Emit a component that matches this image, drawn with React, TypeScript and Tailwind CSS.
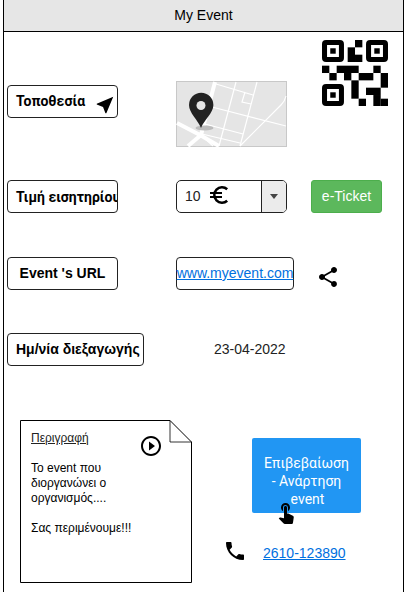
import type { ReactNode } from "react";

const sans = "font-['Liberation_Sans',Arial,sans-serif]";

function Icon({ d, className }: { d: string; className: string }) {
  return (
    <svg viewBox="0 0 24 24" fill="currentColor" className={`shrink-0 ${className}`}>
      <path d={d} />
    </svg>
  );
}

function Label({ children, className }: { children: ReactNode; className: string }) {
  return (
    <div
      className={`flex h-[33px] shrink-0 items-center overflow-hidden rounded-[4px] border border-[#222] text-[14px] font-bold leading-4 whitespace-nowrap ${className}`}
    >
      {children}
    </div>
  );
}

function Finder({ x, y }: { x: number; y: number }) {
  return (
    <>
      <rect x={x + 2.5} y={y + 2.5} width="16.8" height="16.8" rx="1.5" fill="none" stroke="#000" strokeWidth="5" />
      <rect x={x + 8.2} y={y + 8.2} width="5.4" height="5.4" />
    </>
  );
}

const cells: [number, number, number, number][] = [
  [4.5, 0, 1, 1], [3.5, 1, 1, 2], [4.5, 2, 1, 1],
  [0, 3.5, 1, 1], [2, 3.5, 3, 1], [7, 3.5, 1, 1],
  [1, 4.5, 1, 1], [3, 4.5, 1, 1], [5, 4.5, 2, 1], [8, 4.5, 1, 2],
  [4, 5.5, 1, 2.5], [6, 6.5, 2, 1], [7, 7.5, 1, 1.5], [8, 8, 1, 1], [5, 8, 1, 1],
];

function QrCode() {
  return (
    <svg viewBox="0 0 65.5 65.5" className="h-[66px] w-[66px] shrink-0">
      <Finder x={0} y={0} />
      <Finder x={43.7} y={0} />
      <Finder x={0} y={43.7} />
      {cells.map(([x, y, w, h]) => (
        <rect key={`${x}-${y}`} x={x * 7.28} y={y * 7.28} width={w * 7.28} height={h * 7.28} />
      ))}
    </svg>
  );
}

function MapPreview() {
  return (
    <svg viewBox="0 0 111 66" className="h-[66px] w-[111px] shrink-0">
      <rect x=".5" y=".5" width="110" height="65" fill="#e5e5e5" stroke="#c8c8c8" />
      <g fill="none" stroke="#fff">
        <path d="M39 1L25 54M1 42L24 54L43 65M25 54L12 65" strokeWidth="4" />
        <path d="M40 3L77 14M36 26L110 45M29 43L67 53M26 53L64 62M60 1L43 65M81 1L64 65M69 11L66 21L75 23" strokeWidth="1.2" />
        <path d="M64 65L105 24Q109 20 110 15M25 54L37 65" strokeWidth="1.2" />
      </g>
      <ellipse cx="28.5" cy="47" rx="9" ry="2.5" fill="#bbb" />
      <path d="M25 47C22 39 13 32 13 24a12.2 12.2 0 0 1 24.4 0C37.400 32 28 39 25 47Z" fill="#222" />
      <circle cx="25" cy="24.500" r="4.500" fill="#e5e5e5" />
    </svg>
  );
}

export default function App() {
  return (
    <div className={`h-[592px] w-[405px] overflow-hidden bg-white pl-[3px] text-black ${sans}`}>
      <main className="h-[592px] w-[401px] border-x border-black">
        <header className="flex h-8 items-center justify-center border-b border-black bg-[#e6e6e6] text-[14px]">
          My Event
        </header>

        <section className="flex h-[115px] items-start pl-[3px]">
          <Label className="mt-[53px] w-[111px] pl-[8px] font-['Roboto',sans-serif]">
            <span className="w-[79px] pb-px">Τοποθεσία</span>
            <Icon className="mt-[6px] h-[22px] w-[22px] -ml-[1px]" d="M21 3L3 10.530v.98l6.840 2.650L12.480 21h.98L21 3z" />
          </Label>
          <div className="mt-[49px] ml-[58px]"><MapPreview /></div>
          <div className="mt-2 ml-[35px]"><QrCode /></div>
        </section>

        <section className="mt-[33px] flex h-[33px] pl-[3px]">
          <Label className="w-[111px] pl-[8px] font-['Roboto',sans-serif]">Τιμή εισητηρίου</Label>
          <div className="ml-[58px] flex h-[33px] w-[111px] overflow-hidden rounded-[5px] border border-[#222]">
            <div className="flex flex-1 items-center pl-2 text-[14px] text-[#222]">
              <span className="w-[22px]">10</span>
              <svg viewBox="0 0 24 24" className="mt-[-3px] h-6 w-6 shrink-0" fill="none" stroke="#000">
                <path d="M20.200 6.200A7.750 7.750 0 1 0 20.200 17.800" strokeWidth="2.500" />
                <path d="M3 10H15M3 14H15" strokeWidth="2" />
              </svg>
            </div>
            <div className="flex w-[25px] items-center justify-center border-l border-[#222] bg-[#ebebeb]">
              <svg viewBox="0 0 8 5" className="h-[5px] w-2"><path d="M0 0H8L4 5Z" fill="#444" /></svg>
            </div>
          </div>
          <button className="ml-6 h-[33px] w-[71px] rounded-[3px] border border-[#4cae4c] bg-[#5cb85c] text-[14px] text-white">e-Ticket</button>
        </section>

        <section className="mt-11 flex h-[33px] pl-[3px]">
          <Label className="w-[111px] justify-center pb-[2px]">Event 's URL</Label>
          <div className="ml-[58px] flex h-[33px] w-[118px] items-center justify-center rounded-[4px] border border-[#222] text-[14px]">
            <a className="text-[#0070e0] underline">www.myevent.com</a>
          </div>
          <Icon className="mt-2 ml-[22px] h-6 w-6" d="M18 16.080c-.76 0-1.440.3-1.960.77L8.910 12.700c.05-.23.09-.46.09-.7s-.04-.47-.09-.7l7.050-4.110c.54.5 1.250.81 2.040.81 1.660 0 3-1.340 3-3s-1.340-3-3-3-3 1.340-3 3c0 .24.04.47.09.7L8.040 9.810C7.500 9.310 6.790 9 6 9c-1.660 0-3 1.340-3 3s1.340 3 3 3c.79 0 1.500-.31 2.040-.81l7.120 4.160c-.05.21-.08.43-.08.65 0 1.610 1.310 2.920 2.920 2.920s2.920-1.310 2.920-2.920-1.310-2.920-2.920-2.920z" />
        </section>

        <section className="mt-[43px] flex h-[33px] items-center pl-[3px]">
          <Label className="w-[137px] pb-[2px] pl-[8px]">Ημ/νία διεξαγωγής</Label>
          <span className="ml-[70px] text-[14px] text-[#222]">23-04-2022</span>
        </section>

        <section className="mt-[54px] flex h-[163px] pl-4">
          <article className="relative h-[163px] w-[172px] shrink-0 pt-[10px] pl-[11px] text-[12px] leading-[15px]">
            <svg viewBox="0 0 172 163" className="absolute inset-0 h-[163px] w-[172px]" fill="none" stroke="#000">
              <path d="M.5.5H150L171.500 22V162.500H.5Z" />
              <path d="M150 .5V22H171.500" strokeWidth=".8" />
            </svg>
            <div className="relative flex">
              <div className="w-[108px] text-[#222]">
                <p className="mt-px underline">Περιγραφή</p>
                <p className="mt-[15px] text-black">Το event που<br />διοργανώνει ο<br />οργανισμός....</p>
                <p className="mt-[15px] whitespace-nowrap text-black">Σας περιμένουμε!!!</p>
              </div>
              <Icon className="mt-1 h-6 w-6" d="M10 16.500l6-4.500-6-4.500v9zM12 2C6.480 2 2 6.480 2 12s4.480 10 10 10 10-4.480 10-10S17.520 2 12 2zm0 18c-4.410 0-8-3.590-8-8s3.590-8 8-8 8 3.590 8 8-3.590 8-8 8z" />
            </div>
          </article>

          <div className="ml-[31px] pt-[18px]">
            <div className="relative ml-[29px] h-[75px] w-[109px]">
              <button className="h-[75px] w-[109px] rounded-[2px] bg-[#2196f3] pt-[10px] font-[Roboto,sans-serif] text-[14px] leading-[18px] text-white">
                Επιβεβαίωση<br />- Ανάρτηση<br /><span className="ml-[2px]">event</span>
              </button>
              <Icon className="absolute top-[62px] left-[22px] h-6 w-6" d="M9 11.240V7.500a2.500 2.500 0 0 1 5 0v3.740c1.210-.81 2-2.180 2-3.740C16 5.010 13.990 3 11.500 3S7 5.010 7 7.500c0 1.560.79 2.930 2 3.740zm9.840 4.630l-4.540-2.260c-.17-.07-.35-.11-.54-.11H13v-6c0-.83-.67-1.500-1.500-1.500S10 6.670 10 7.500v10.740l-3.430-.72c-.08-.01-.15-.03-.24-.03-.31 0-.59.13-.79.33l-.79.8 4.940 4.940c.27.27.65.44 1.060.44h6.790c.75 0 1.330-.55 1.440-1.280l.75-5.270c.01-.07.02-.14.02-.2 0-.62-.38-1.160-.91-1.380z" />
            </div>
            <div className="mt-[25px] flex items-center">
              <Icon className="h-6 w-6" d="M6.620 10.790c1.440 2.830 3.760 5.140 6.590 6.590l2.200-2.200c.27-.27.67-.36 1.020-.24 1.120.37 2.330.57 3.570.57.55 0 1 .45 1 1V20c0 .55-.45 1-1 1-9.390 0-17-7.610-17-17 0-.55.45-1 1-1h3.500c.55 0 1 .45 1 1 0 1.250.2 2.450.57 3.570.11.35.03.74-.25 1.020l-2.200 2.200z" />
              <a className="mt-[5px] ml-4 text-[14px] text-[#0070e0] underline">2610-123890</a>
            </div>
          </div>
        </section>
      </main>
    </div>
  );
}
